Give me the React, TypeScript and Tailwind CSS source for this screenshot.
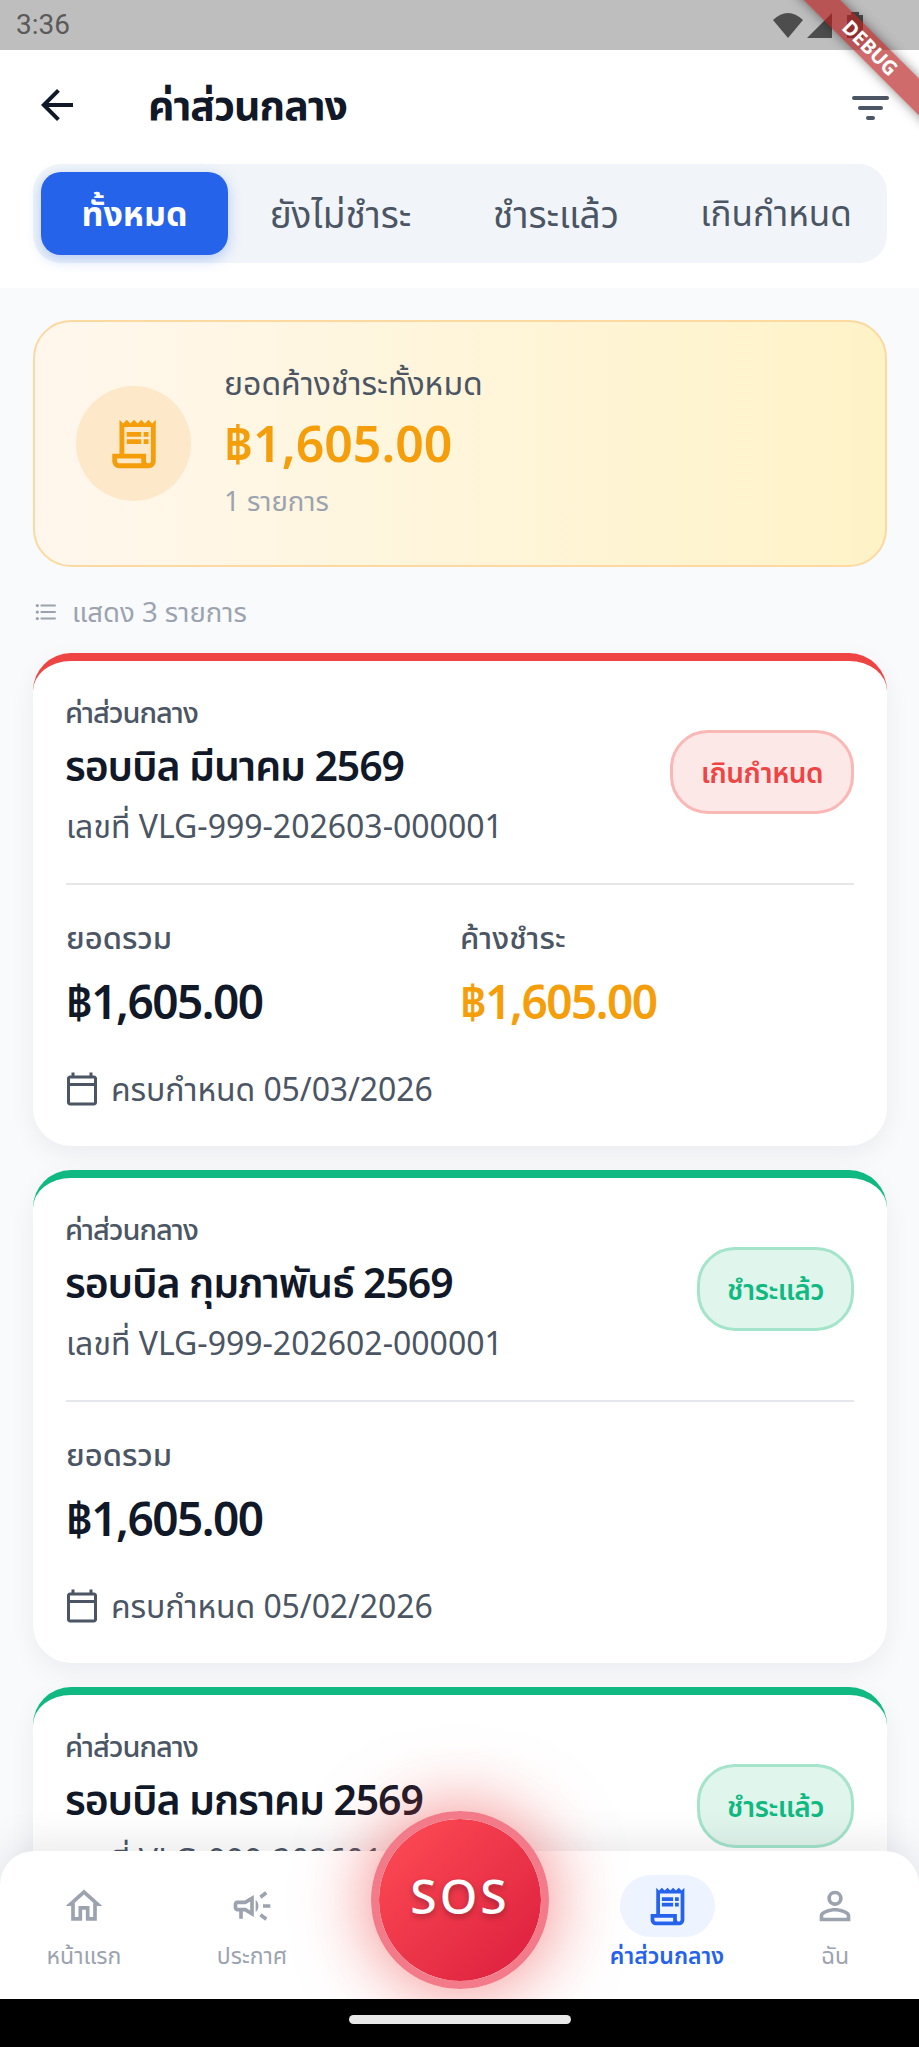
import React from "react"
import {
  MdArrowBack,
  MdOutlineCalendarToday,
  MdOutlineCampaign,
  MdOutlineHome,
  MdOutlineReceiptLong,
  MdPersonOutline,
  MdFormatListBulleted,
} from "react-icons/md"

const FONT = { fontFamily: '"Noto Sans", "Noto Sans Thai", sans-serif' }

const tabs = ["ทั้งหมด", "ยังไม่ชำระ", "ชำระแล้ว", "เกินกำหนด"]

type Bill = {
  title: string
  number: string
  due: string
  overdue?: boolean
  partial?: boolean
}

const bills: Bill[] = [
  { title: "รอบบิล มีนาคม 2569", number: "เลขที่ VLG-999-202603-000001", due: "ครบกำหนด 05/03/2026", overdue: true },
  { title: "รอบบิล กุมภาพันธ์ 2569", number: "เลขที่ VLG-999-202602-000001", due: "ครบกำหนด 05/02/2026" },
  // only the top of this one is on screen, the rest sits under the nav
  { title: "รอบบิล มกราคม 2569", number: "เลขที่ VLG-999-202601-000001", due: "ครบกำหนด 05/01/2026", partial: true },
]

const BillCard = ({ bill }: { bill: Bill }) => (
  <div
    className={
      "rounded-[38px] border-t-[8px] bg-white shadow-[0_8px_26px_rgba(15,23,42,0.06)] px-[33px] pt-[30px] h-[493px] shrink-0 " +
      (bill.overdue ? "border-[#ef4444]" : "border-[#10b981]")
    }
  >
    <div className="flex items-center justify-between h-[194px] pb-[30px] border-b-2 border-[#e5e7eb]">
      <div className="self-start">
        <div className="text-[29px] leading-[41px] ml-[-1px] font-medium text-[#4b5563] tracking-[-1px]">ค่าส่วนกลาง</div>
        <div className="text-[41px] leading-[52px] mt-[7px] ml-[-1px] font-semibold text-[#111827] tracking-[-1.1px]">{bill.title}</div>
        <div className="text-[32px] leading-[44px] mt-[13px] text-[#4b5563]">{bill.number}</div>
      </div>
      <div
        className={
          "h-[84px] rounded-[38px] border-[3px] flex items-center justify-center text-[28px] font-semibold tracking-[-0.5px] " +
          (bill.overdue
            ? "w-[184px] bg-[#fde8e8] border-[#fbb6b6] text-[#ef4444]"
            : "w-[157px] bg-[#e0f5ec] border-[#a3e4cb] text-[#10b981]")
        }
      >
        {bill.overdue ? "เกินกำหนด" : "ชำระแล้ว"}
      </div>
    </div>
    {!bill.partial && (
      <>
        <div className="grid grid-cols-2 mt-[32px]">
          <div>
            <div className="text-[31px] leading-[40px] font-medium text-[#4b5563]">ยอดรวม</div>
            <div className="text-[46px] leading-[60px] mt-[14px] font-semibold text-[#111827] tracking-[-1.5px]">฿1,605.00</div>
          </div>
          {bill.overdue && (
            <div>
              <div className="text-[31px] leading-[40px] font-medium text-[#4b5563]">ค้างชำระ</div>
              <div className="text-[46px] leading-[60px] mt-[14px] font-semibold text-[#f59e0b] tracking-[-1.5px]">฿1,605.00</div>
            </div>
          )}
        </div>
        <div className="flex items-center gap-[11px] mt-[38px] ml-[-2px] text-[32px] leading-[40px] text-[#4b5563]">
          <MdOutlineCalendarToday size={36} className="text-[#4b5563]" />
          <span className="tracking-[-0.1px]">{bill.due}</span>
        </div>
      </>
    )}
  </div>
)

const NavItem = ({ label, children, active }: { label: string; children: React.ReactNode; active?: boolean }) => (
  <div className="flex flex-col items-center">
    <div
      className={
        "w-[95px] h-[62px] rounded-full flex items-center justify-center " +
        (active ? "bg-[#eef4ff] text-[#2563eb]" : "text-[#9ca3af]")
      }
    >
      {children}
    </div>
    <div
      className={
        "mt-[1px] text-[23px] leading-[34px] whitespace-nowrap " +
        (active ? "font-semibold text-[#2563eb]" : "text-[#9ca3af]")
      }
    >
      {label}
    </div>
  </div>
)

export default function App() {
  return (
    <div className="relative w-[919px] h-[2047px] overflow-hidden bg-[#f8fafc] flex flex-col" style={FONT}>
      {/* status bar */}
      <div className="h-[50px] shrink-0 bg-[#bebebe] flex items-center justify-between pl-[16px] pr-[56px]">
        <span className="text-[28px] text-[#5a5a5a]" style={{ fontFamily: "Roboto, sans-serif" }}>3:36</span>
        <svg width="90" height="26" viewBox="0 0 90 26">
          <path d="M0 8 Q15 -6 30 8 L15 26 Z" fill="#4d4d4d" />
          <path d="M34 26 L59 1 V26 Z" fill="#4d4d4d" />
          <path d="M74 3 h4 v-3 h8 v3 h4 v23 h-16 Z" fill="#4d4d4d" />
        </svg>
      </div>

      {/* app bar + tabs */}
      <div className="bg-white shrink-0 h-[238px] pl-[33px] pr-[32px]">
        <div className="flex items-center h-[114px] pb-[4px]">
          <MdArrowBack size={48} className="text-[#111827]" />
          <div className="ml-[67px] text-[41px] font-bold text-[#111827] tracking-[-1px]">ค่าส่วนกลาง</div>
          <svg width="37" height="25" viewBox="0 0 37 25" className="ml-auto mr-[-2px] mt-[6px]" fill="#4b5563">
            <rect x="0" y="0" width="37" height="4" rx="2" />
            <rect x="6" y="10" width="25" height="4" rx="2" />
            <rect x="14" y="20" width="9" height="4" rx="2" />
          </svg>
        </div>
        <div className="h-[99px] bg-[#f1f5f9] rounded-[28px] flex items-center pl-[8px]">
          {tabs.map((t, i) =>
            i === 0 ? (
              <div
                key={t}
                className="w-[187px] h-[83px] shrink-0 rounded-[20px] bg-[#2563eb] text-white text-[34px] font-bold flex items-center justify-center shadow-[0_4px_14px_rgba(37,99,235,0.3)]"
              >
                {t}
              </div>
            ) : (
              <div
                key={t}
                className={
                  "shrink-0 text-[#4b5563] text-center whitespace-nowrap " +
                  (i === 1 ? "w-[225px] text-[37px]" : i === 2 ? "w-[206px] text-[37px]" : "w-[234px] text-[35px]")
                }
              >
                {t}
              </div>
            ),
          )}
        </div>
      </div>

      {/* content */}
      <div className="flex-1 min-h-0 pl-[33px] pr-[32px] pt-[32px] flex flex-col">
        <div className="h-[247px] shrink-0 rounded-[38px] border-2 border-[#fcd9a0] bg-gradient-to-r from-[#fff7ed] to-[#fef3c7] flex items-center pl-[41px]">
          <div className="w-[115px] h-[115px] rounded-full bg-[#fde9c9] flex items-center justify-center">
            <MdOutlineReceiptLong size={58} className="text-[#f59e0b]" />
          </div>
          <div className="ml-[33px] pb-[6px]">
            <div className="text-[32px] leading-[40px] text-[#4b5563]">ยอดค้างชำระทั้งหมด</div>
            <div className="text-[50px] leading-[68px] mt-[6px] font-semibold text-[#f59e0b]">฿1,605.00</div>
            <div className="text-[27.5px] leading-[36px] mt-[6px] text-[#9ca3af]">1 รายการ</div>
          </div>
        </div>

        <div className="flex items-center gap-[13px] mt-[28px] h-[34px] shrink-0 text-[27.5px] text-[#9ca3af]">
          <MdFormatListBulleted size={26} />
          <span>แสดง 3 รายการ</span>
        </div>

        <div className="flex flex-col gap-[24px] mt-[24px]">
          {bills.map((b) => (
            <BillCard key={b.title} bill={b} />
          ))}
        </div>
      </div>

      {/* bottom nav */}
      <div className="absolute left-0 right-0 top-[1851px] h-[148px] bg-white rounded-t-[34px] shadow-[0_-6px_40px_rgba(15,23,42,0.1)] grid grid-cols-[168px_168px_247px_168px_168px] pt-[24px]">
        <NavItem label="หน้าแรก"><MdOutlineHome size={44} /></NavItem>
        <NavItem label="ประกาศ"><MdOutlineCampaign size={44} /></NavItem>
        <div />
        <NavItem label="ค่าส่วนกลาง" active><MdOutlineReceiptLong size={45} /></NavItem>
        <NavItem label="ฉัน"><MdPersonOutline size={46} /></NavItem>
      </div>

      {/* SOS */}
      <div className="absolute left-[371px] top-[1811px] w-[178px] h-[178px] rounded-full bg-gradient-to-br from-[#ff4b55] to-[#db1a3e] border-[8px] border-[#f37a88] shadow-[0_0_70px_4px_rgba(239,68,68,0.6)] [background-clip:padding-box] flex items-center justify-center text-white text-[48px] font-medium tracking-[3px] pb-[8px] [text-shadow:0_3px_6px_rgba(0,0,0,0.3)]">
        SOS
      </div>

      {/* android gesture bar */}
      <div className="absolute left-0 right-0 bottom-0 h-[48px] bg-black flex items-center justify-center">
        <div className="w-[222px] h-[9px] rounded-full bg-[#e8e8e8] mb-[8px]" />
      </div>

      {/* flutter debug banner */}
      <div className="absolute left-[770px] top-[35px] w-[200px] h-[26px] rotate-45 bg-[#b71c1c]/65 shadow-[0_0_12px_rgba(0,0,0,0.45)] flex items-center justify-center text-white text-[20px] font-bold">
        DEBUG
      </div>
    </div>
  )
}
